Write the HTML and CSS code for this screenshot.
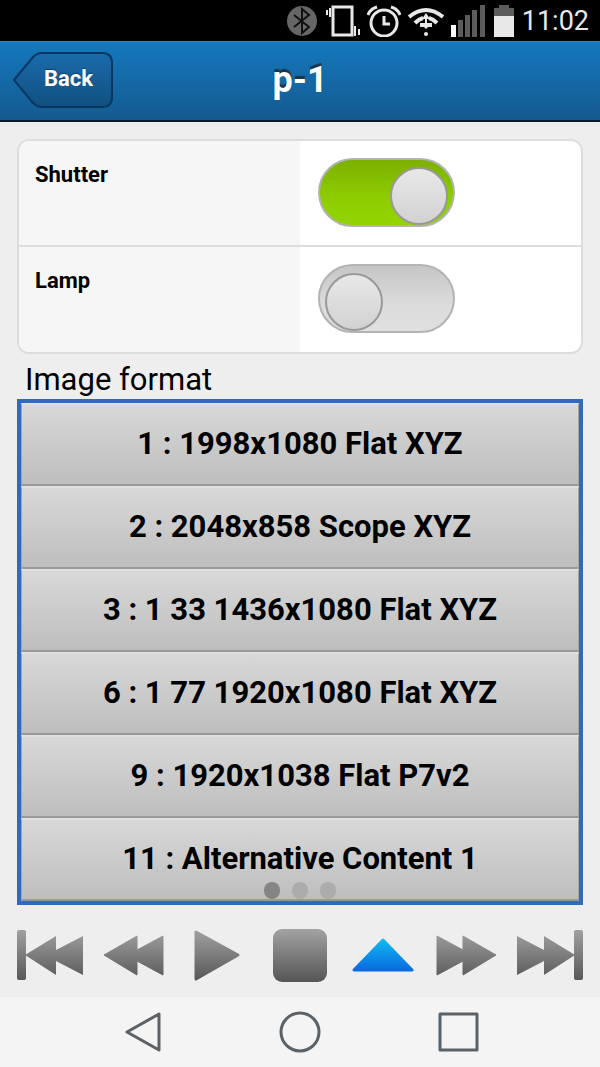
FILE: index.html
```html
<!DOCTYPE html>
<html lang="en">
<head>
  <meta charset="UTF-8">
  <meta name="viewport" content="width=device-width, initial-scale=1">
  <title>p-1</title>
  <link rel="stylesheet" href="styles.css">
</head>
<body>

  <div class="status-bar">
    <svg width="30" height="32" viewBox="0 0 30 32">
      <circle cx="15" cy="16" r="15" fill="#666"/>
      <path d="M7 10l15 12-7 6V4l7 6L7 22" fill="none" stroke="#111" stroke-width="2"/>
    </svg>
    <svg width="36" height="32" viewBox="0 0 36 32" fill="none" stroke="#e8e8e8">
      <rect x="9" y="2" width="19" height="28" stroke-width="3"/>
      <path d="M6 3v9M3 5v5M31 21v10M35 24v6" stroke-width="2"/>
    </svg>
    <svg width="34" height="32" viewBox="0 0 34 32" fill="none" stroke="#e8e8e8" stroke-width="3">
      <circle cx="17" cy="18" r="13"/>
      <path d="M17 11v8h6M1 10q2-6 9-8M33 10q-2-6-9-8"/>
    </svg>
    <svg width="36" height="32" viewBox="0 0 36 32" fill="none" stroke="#e8e8e8" stroke-width="4">
      <path d="M1 12q17-14 34 0M7 18q4-4 8-5M29 18q-4-4-8-5M12 20h12"/>
      <path d="M18 8l4 6h-3v4h5l-6 6-6-6h5v-4h-3z" fill="#e8e8e8" stroke="none"/>
      <circle cx="18" cy="29" r="2" fill="#e8e8e8" stroke="none"/>
    </svg>
    <svg width="34" height="32" viewBox="0 0 34 32" fill="#5c5c5c">
      <path d="M0 20h5v12H0z" fill="#fff"/>
      <path d="M7 15h5v17H7zM14 10h5v22h-5zM21 5h5v27h-5zM29 0h5v32h-5z"/>
    </svg>
    <svg class="battery" width="20" height="32" viewBox="0 0 20 32">
      <path d="M5 0h10v3h5v8H0V3h5z" fill="#5c5c5c"/>
      <path d="M0 11h20v21H0z" fill="#e8e8e8"/>
    </svg>
    <span class="time">11:02</span>
  </div>

  <header class="header">
    <a class="back" href="#">
      <svg class="back-shape" viewBox="0 0 100 56">
        <defs>
          <linearGradient id="backFill" x1="0" y1="0" x2="0" y2="1">
            <stop offset="0" stop-color="#1a6bab"/>
            <stop offset="1" stop-color="#10507f"/>
          </linearGradient>
        </defs>
        <path d="M1 28L20 5q4-4 9-4h60q10 0 10 10v34q0 10-10 10H29q-5 0-9-4z" fill="url(#backFill)" stroke="#073763" stroke-width="2"/>
      </svg>
      <span>Back</span>
    </a>
    <h1>p-1</h1>
  </header>

  <main class="content">
    <div class="panel">
      <div class="panel-row">
        <label for="shutter">Shutter</label>
        <div class="panel-field"><input class="toggle" type="checkbox" id="shutter" checked></div>
      </div>
      <div class="panel-row">
        <label for="lamp">Lamp</label>
        <div class="panel-field"><input class="toggle" type="checkbox" id="lamp"></div>
      </div>
    </div>

    <h2>Image format</h2>
    <div class="formats">
      <button type="button">1 : 1998x1080 Flat XYZ</button>
      <button type="button">2 : 2048x858 Scope XYZ</button>
      <button type="button">3 : 1 33 1436x1080 Flat XYZ</button>
      <button type="button">6 : 1 77 1920x1080 Flat XYZ</button>
      <button type="button">9 : 1920x1038 Flat P7v2</button>
      <button type="button">11 : Alternative Content 1</button>
      <div class="dots">
        <span class="dot active"></span>
        <span class="dot"></span>
        <span class="dot"></span>
      </div>
    </div>

    <div class="controls">
      <button type="button" aria-label="Previous">
        <svg viewBox="0 0 66 56">
          <defs>
            <linearGradient id="grey" gradientUnits="userSpaceOnUse" x1="0" y1="0" x2="0" y2="56">
              <stop offset="0" stop-color="#a4a4a4"/>
              <stop offset="1" stop-color="#525252"/>
            </linearGradient>
            <linearGradient id="blue" x1="0" y1="0" x2="0" y2="1">
              <stop offset="0" stop-color="#10b8f4"/>
              <stop offset="1" stop-color="#0a6be0"/>
            </linearGradient>
          </defs>
          <g fill="url(#grey)">
            <rect x="0" y="2" width="9" height="50" rx="2"/>
            <path d="M8 27L39 8v14L66 8v39L39 33v14z"/>
          </g>
        </svg>
      </button>
      <button type="button" aria-label="Rewind">
        <svg viewBox="0 0 66 56"><path d="M4 27L37 8v14L63 8v39L37 33v14z" fill="url(#grey)" stroke="url(#grey)" stroke-linejoin="round"/></svg>
      </button>
      <button type="button" aria-label="Play">
        <svg viewBox="0 0 66 56"><path d="M12 4v47L54 27z" fill="url(#grey)" stroke="url(#grey)" stroke-width="3" stroke-linejoin="round"/></svg>
      </button>
      <button type="button" aria-label="Stop">
        <svg viewBox="0 0 66 56"><rect x="6" y="1" width="54" height="53" rx="9" fill="url(#grey)"/></svg>
      </button>
      <button type="button" aria-label="Eject">
        <svg viewBox="0 0 66 56"><path d="M33 12L4 42h58z" fill="url(#blue)" stroke="url(#blue)" stroke-width="3" stroke-linejoin="round"/></svg>
      </button>
      <button type="button" aria-label="Fast forward">
        <svg viewBox="0 0 66 56"><path d="M62 27L29 8v14L3 8v39l26-14v14z" fill="url(#grey)" stroke="url(#grey)" stroke-linejoin="round"/></svg>
      </button>
      <button type="button" aria-label="Next">
        <svg viewBox="0 0 66 56">
          <g fill="url(#grey)">
            <rect x="57" y="2" width="9" height="50" rx="2"/>
            <path d="M58 27L27 8v14L0 8v39l27-14v14z"/>
          </g>
        </svg>
      </button>
    </div>
  </main>

  <nav class="nav-bar">
    <button type="button" aria-label="Back">
      <svg viewBox="0 0 40 40"><path d="M6 20L38 2v36z"/></svg>
    </button>
    <button type="button" aria-label="Home">
      <svg viewBox="0 0 40 40"><circle cx="20" cy="20" r="19"/></svg>
    </button>
    <button type="button" aria-label="Recent apps">
      <svg viewBox="0 0 40 40"><path d="M1 2h37v36H1z"/></svg>
    </button>
  </nav>

</body>
</html>
```
FILE: styles.css
```css
*,
*::before {
  box-sizing: border-box;
}

body {
  margin: 0;
  min-height: 100vh;
  display: flex;
  flex-direction: column;
  background: #eee;
  color: #000;
  font-family: Roboto, "Noto Sans", sans-serif;
}

button {
  margin: 0;
  padding: 0;
  border: 0;
  background: none;
  font-family: inherit;
  cursor: pointer;
}

svg {
  display: block;
}

/* phone status bar */
.status-bar {
  display: flex;
  justify-content: flex-end;
  align-items: center;
  gap: 7px;
  height: 41px;
  padding-right: 11px;
  background: #000;
}

.status-bar .time {
  color: #e8e8e8;
  font-size: 27px;
  line-height: 32px;
}

.status-bar .battery {
  margin: 0 1px 0 2px;
}

/* title bar */
.header {
  display: grid;
  grid-template-columns: 1fr auto 1fr;
  align-items: center;
  height: 81px;
  padding: 0 13px 2px;
  border-top: 1px solid #2a86c4;
  border-bottom: 2px solid #0a1c30;
  background: linear-gradient(#1578bd, #145a8f);
}

.back {
  display: grid;
  width: 100px;
  color: #fff;
  font-size: 22px;
  font-weight: bold;
  line-height: 54px;
  text-decoration: none;
  text-shadow: 0 -1px 1px #0b3f68;
}

.back-shape,
.back span {
  grid-area: 1 / 1;
}

.back span {
  padding-left: 31px;
}

.header h1 {
  margin: 0;
  color: #fff;
  font-size: 36px;
  line-height: 76px;
  text-shadow: 0 -3px 1px #1d3348;
}

.content {
  flex: 1;
  display: flex;
  flex-direction: column;
  padding: 17px 17px 0;
}

/* shutter and lamp */
.panel {
  border: 2px solid #ddd;
  border-radius: 12px;
  background: #fff;
  overflow: hidden;
}

.panel-row {
  display: grid;
  grid-template-columns: 1fr 1fr;
  height: 104px;
}

.panel-row + .panel-row {
  height: 107px;
  border-top: 2px solid #ddd;
}

.panel label {
  padding: 20px 16px;
  background: #f6f6f6;
  font-size: 22px;
  font-weight: bold;
  line-height: 28px;
}

.panel-field {
  padding: 17px 18px;
}

.toggle {
  appearance: none;
  display: block;
  width: 137px;
  height: 69px;
  margin: 0;
  padding: 7px 5px;
  border: 2px solid #b3b3b3;
  border-radius: 35px;
  background: linear-gradient(#c6c6c6, #dcdcdc 60%, #e0e0e0);
}

.toggle::before {
  content: "";
  display: block;
  width: 58px;
  height: 58px;
  border: 2px solid #999;
  border-radius: 50%;
  background: linear-gradient(#e8e8e8, #d2d2d2);
}

.toggle:checked {
  background: linear-gradient(#7cb000, #8ece00 60%, #92d400);
}

.toggle:checked::before {
  margin-left: auto;
}

/* image formats */
.content h2 {
  margin: 9px 8px 2px;
  font-size: 31px;
  font-weight: normal;
  line-height: 34px;
}

.formats {
  position: relative;
  flex: 1;
  display: grid;
  grid-auto-rows: 1fr;
  border: 4px solid #2f6abc;
}

.formats button {
  min-height: 60px;
  padding-bottom: 2px;
  border-top: 2px solid #e0e0e0;
  border-bottom: 2px solid #999;
  border-left: 1px solid #a4a4a4;
  border-right: 1px solid #a4a4a4;
  background: linear-gradient(#d8d8d8, #bebebe);
  color: #000;
  font-size: 31px;
  font-weight: bold;
}

.dots {
  position: absolute;
  bottom: 2px;
  left: 0;
  right: 0;
  display: flex;
  justify-content: center;
  gap: 12px;
}

.dot {
  width: 16px;
  height: 17px;
  border-radius: 8px;
  background: #acacac;
}

.dot.active {
  background: #858585;
}

/* playback */
.controls {
  display: flex;
  justify-content: space-between;
  padding: 23px 0 13px;
}

.controls svg {
  width: 66px;
  height: 56px;
}

.nav-bar {
  display: flex;
  justify-content: center;
  align-items: center;
  gap: 119px;
  height: 70px;
  background: #f4f4f4;
}

.nav-bar svg {
  width: 40px;
  height: 40px;
  fill: none;
  stroke: #5a6268;
  stroke-width: 3;
  stroke-linejoin: round;
  overflow: visible;
}
```
